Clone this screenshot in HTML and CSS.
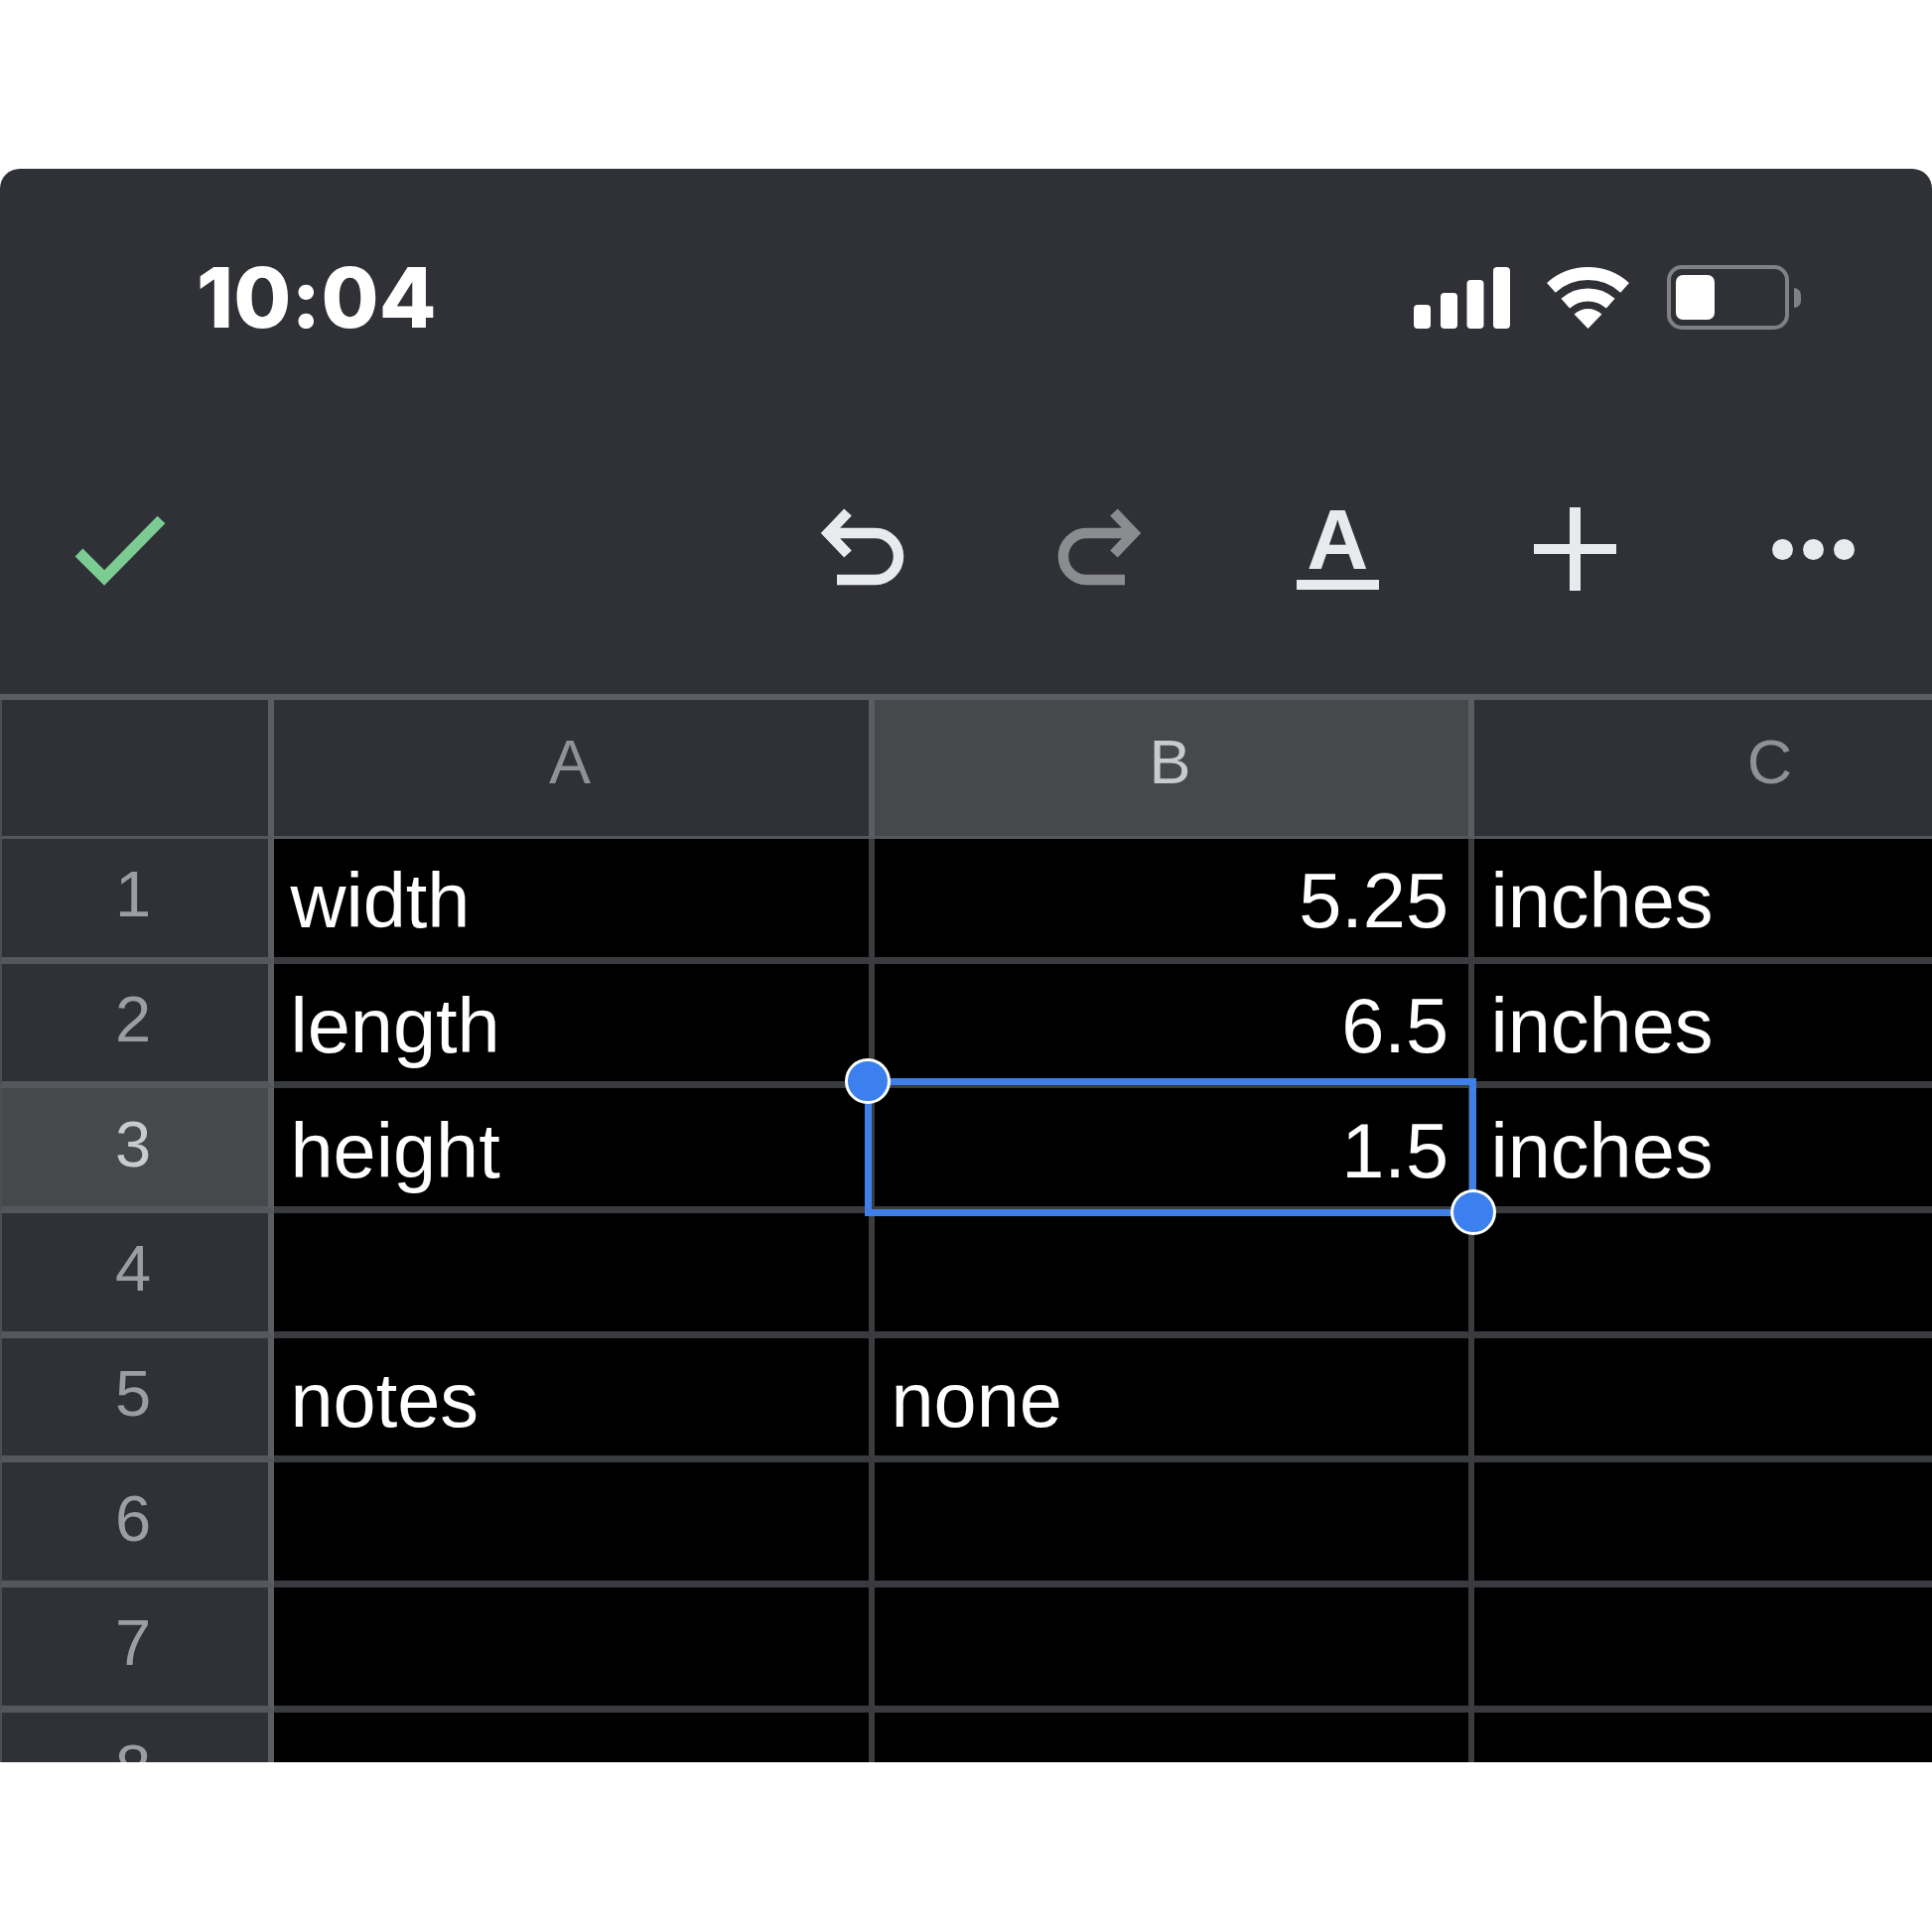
FILE: index.html
```html
<!DOCTYPE html>
<html lang="en">
<head>
<meta charset="utf-8">
<title>Sheet</title>
<link rel="stylesheet" href="styles.css">
</head>
<body>
<main class="phone">
  <header class="status">
    <div class="time">10:04</div>
    <div class="status-icons">
      <svg class="signal" viewBox="0 0 97 62" width="97" height="62" aria-hidden="true">
        <rect x="0" y="38" width="17" height="24" rx="4"/>
        <rect x="27" y="26" width="17" height="36" rx="4"/>
        <rect x="53.500" y="13" width="17" height="49" rx="4"/>
        <rect x="80" y="0" width="17" height="62" rx="4"/>
      </svg>
      <svg class="wifi" viewBox="0 0 83 62" width="83" height="62" aria-hidden="true">
        <path class="arc" d="M4.400 20.800A55.500 55.500 0 0 1 78.600 20.800"/>
        <path class="arc" d="M18.750 36.700A34 34 0 0 1 64.250 36.700"/>
        <path class="wedge" d="M41.500 62L27.600 47.600A20 20 0 0 1 55.400 47.600Z"/>
      </svg>
      <div class="battery"><div class="battery-body"><div class="battery-fill"></div></div><div class="battery-nub"></div></div>
    </div>
  </header>

  <nav class="toolbar">
    <svg class="check" viewBox="0 0 100 80" width="100" height="80" aria-hidden="true">
      <path d="M9.500 42.500L35 68L92.500 9.500"/>
    </svg>
    <div class="tools">
      <div class="tool">
        <svg class="glyph" viewBox="0 0 100 100" width="100" height="100" aria-hidden="true">
          <path d="M25 81H63.500A23.500 23.500 0 0 0 63.500 34H14M36 13L16 34L36 55"/>
        </svg>
      </div>
      <div class="tool">
        <svg class="glyph glyph-off" viewBox="0 0 100 100" width="100" height="100" aria-hidden="true">
          <path d="M75 81H36.500A23.500 23.500 0 0 1 36.500 34H86M64 13L84 34L64 55"/>
        </svg>
      </div>
      <div class="tool"><div class="text-format"><span class="text-format-a">A</span><span class="text-format-bar"></span></div></div>
      <div class="tool"><div class="plus"></div></div>
      <div class="tool"><div class="dots"><span></span><span></span><span></span></div></div>
    </div>
  </nav>

  <section class="sheet">
    <div class="head corner"></div>
    <div class="head">A</div>
    <div class="head head-on">B</div>
    <div class="head">C</div>

    <div class="num">1</div><div class="cell">width</div><div class="cell right">5.25</div><div class="cell">inches</div>
    <div class="num">2</div><div class="cell">length</div><div class="cell right">6.5</div><div class="cell">inches</div>
    <div class="num num-on">3</div><div class="cell">height</div><div class="cell right">1.5</div><div class="cell">inches</div>
    <div class="num">4</div><div class="cell"></div><div class="cell"></div><div class="cell"></div>
    <div class="num">5</div><div class="cell">notes</div><div class="cell">none</div><div class="cell"></div>
    <div class="num">6</div><div class="cell"></div><div class="cell"></div><div class="cell"></div>
    <div class="num">7</div><div class="cell"></div><div class="cell"></div><div class="cell"></div>
    <div class="num">8</div><div class="cell"></div><div class="cell"></div><div class="cell"></div>

    <div class="selection">
      <span class="handle handle-start"></span>
      <span class="handle handle-end"></span>
    </div>
  </section>
</main>
</body>
</html>
```
FILE: styles.css
```css
* { box-sizing: border-box; }

html, body { margin: 0; background: #fff; }

body { padding-top: 170px; height: 1946px; }

.phone {
  height: 1605px;
  background: #303136;
  border-radius: 20px 20px 0 0;
  overflow: hidden;
  display: flex;
  flex-direction: column;
}

/* status bar */
.status {
  height: 237px;
  flex: none;
  padding: 92px 132px 0 198px;
  display: flex;
  justify-content: space-between;
  align-items: flex-start;
}

.time {
  font: 800 84px/76px Inter, "Liberation Sans", sans-serif;
  color: #fff;
  letter-spacing: 0.200px;
}

.status-icons {
  display: flex;
  align-items: center;
  margin-top: 5px;
  margin-left: auto;
}

.signal { fill: #fff; display: block; }

.wifi { display: block; margin-left: 37px; }
.wifi .arc { fill: none; stroke: #fff; stroke-width: 13; }
.wifi .wedge { fill: #fff; }

.battery { display: flex; align-items: center; margin-left: 38px; }

.battery-body {
  width: 123px;
  height: 65px;
  border: 4px solid #808185;
  border-radius: 15px;
  padding: 6px 5px;
}

.battery-fill {
  width: 39px;
  height: 45px;
  background: #fff;
  border-radius: 7px;
}

.battery-nub {
  width: 7px;
  height: 20px;
  margin-left: 5px;
  background: #808185;
  border-radius: 0 8px 8px 0;
}

/* toolbar */
.toolbar {
  height: 292px;
  flex: none;
  display: flex;
  align-items: center;
  justify-content: space-between;
  padding-left: 70px;
}

.check { display: block; margin-top: 2px; }
.check path { fill: none; stroke: #7bcb92; stroke-width: 11; }

.tools { display: flex; }

.tool {
  width: 239.5px;
  height: 100px;
  display: flex;
  align-items: center;
  justify-content: center;
}

.glyph { display: block; }
.glyph path { fill: none; stroke: #e9eaee; stroke-width: 10.500; }
.glyph-off path { stroke: #8b8c8f; }

.text-format {
  width: 83px;
  display: flex;
  flex-direction: column;
  align-items: center;
}

.text-format-a {
  font: 700 86px/62px "Liberation Sans", Arial, sans-serif;
  height: 62px;
  color: #e9eaee;
}

.text-format-bar {
  width: 83px;
  height: 10px;
  margin-top: 10px;
  background: #e9eaee;
}

.plus {
  width: 83px;
  height: 84px;
  background:
    linear-gradient(#e9eaee, #e9eaee) center / 100% 10px no-repeat,
    linear-gradient(#e9eaee, #e9eaee) center / 11px 100% no-repeat;
}

.dots { display: flex; gap: 10px; }
.dots span {
  width: 21px;
  height: 21px;
  border-radius: 50%;
  background: #e9eaee;
}

/* grid */
.sheet {
  position: relative;
  flex: 1;
  min-height: 0;
  display: grid;
  grid-template-columns: 276px 605px 604px 604px;
  grid-template-rows: 140px repeat(8, 125.670px);
  border-top: 6px solid #5a5e63;
  font-family: "Liberation Sans", Arial, sans-serif;
}

.head {
  display: flex;
  align-items: center;
  justify-content: center;
  padding: 0 3px 14px 0;
  background: #303136;
  color: #8f9196;
  font-size: 63px;
  border-right: 6px solid #5a5e63;
  border-bottom: 3px solid #54575c;
}

.corner { border-left: 2px solid #4c4e52; }

.head-on { background: #47484b; color: #c8cacd; }

.num {
  display: flex;
  align-items: center;
  justify-content: center;
  padding: 0 4px 7px 0;
  background: #303136;
  color: #9a9da2;
  font-size: 65px;
  border-left: 2px solid #4c4e52;
  border-right: 6px solid #5a5e63;
  border-bottom: 7px solid #54585d;
}

.num-on { background: #47484b; color: #c8cacd; }

.cell {
  display: flex;
  align-items: center;
  padding: 7px 0 0 16.500px;
  background: #000;
  color: #fff;
  font-size: 77.500px;
  border-right: 6px solid #3c3c3f;
  border-bottom: 7px solid #3a3b3e;
  white-space: nowrap;
}

.right { justify-content: flex-end; padding-right: 20px; padding-left: 0; }

/* selection */
.selection {
  position: absolute;
  left: 871px;
  top: 381px;
  width: 616px;
  height: 139px;
  border: 7px solid #3f7fe8;
}

.handle {
  position: absolute;
  width: 46px;
  height: 46px;
  border-radius: 50%;
  background: #3b80ee;
  border: 3px solid #fff;
}

.handle-start { left: -27px; top: -27px; }
.handle-end { right: -27px; bottom: -26px; }
```
